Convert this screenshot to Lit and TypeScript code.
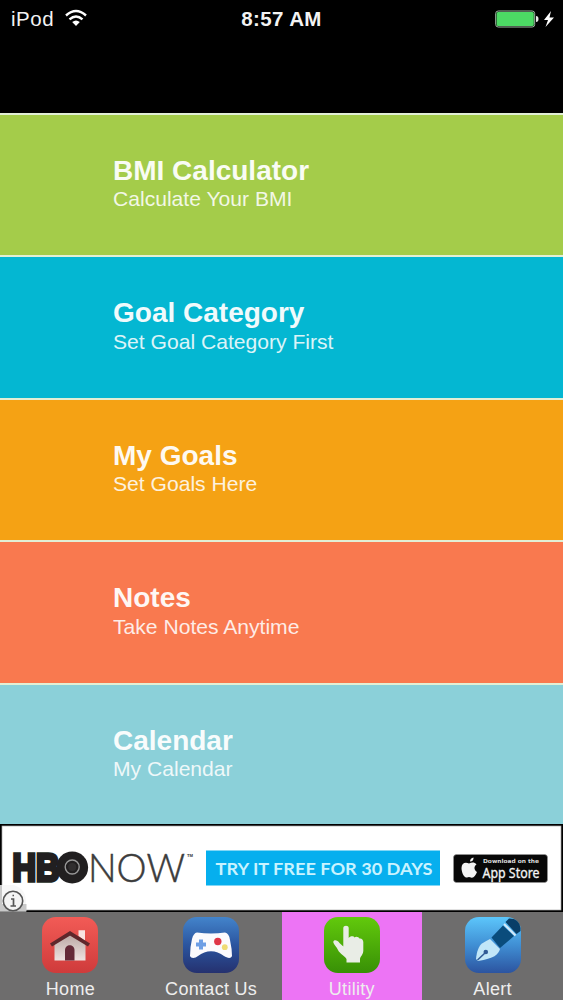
import { LitElement, html, css, svg } from 'lit';
import { customElement, property } from 'lit/decorators.js';
import { classMap } from 'lit/directives/class-map.js';

const icons: Record<string, unknown> = {
  home: svg`
    <defs>
      <linearGradient id="bg" x1="0" y1="0" x2="0" y2="1"><stop offset="0" stop-color="#f25b56"/><stop offset="1" stop-color="#cf3b3b"/></linearGradient>
      <linearGradient id="wall" x1="0" y1="0" x2="0" y2="1"><stop offset="0" stop-color="#b9a5a1"/><stop offset="1" stop-color="#eee3e1"/></linearGradient>
    </defs>
    <rect width="56" height="56" rx="14" fill="url(#bg)"/>
    <path d="M36.500 13.300H43V24L36.500 19Z" fill="#f8e2e1"/>
    <path d="M12.500 26L28 16.500L43.500 26V43.500H12.500Z" fill="url(#wall)"/>
    <path d="M23 43.500V33C23 26.500 32.500 26.500 32.500 33V43.500Z" fill="#642a38"/>
    <path d="M9 28L28 16.300L47 28" fill="none" stroke="#60272b" stroke-width="3.800"/>`,
  contact: svg`
    <defs><linearGradient id="bg" x1="0" y1="0" x2="0" y2="1"><stop offset="0" stop-color="#4384cb"/><stop offset=".5" stop-color="#2b559f"/><stop offset="1" stop-color="#25316f"/></linearGradient></defs>
    <rect width="56" height="56" rx="14" fill="url(#bg)"/>
    <path d="M14 15.500Q28 17.500 42 15.500Q46 16 47 23Q49 32 49 39C48 42 44 41 41 39C33 32.500 23 32.500 15 39C12 41.500 8 41.500 7 39Q7 30 9 22Q10.500 16 14 15.500Z" fill="#fbfafd"/>
    <path d="M16 22.500H20V25.500H23V29.500H20V32.500H16V29.500H13V25.500H16Z" fill="#6e9ee5"/>
    <circle cx="34.800" cy="24.500" r="3.700" fill="#df3547"/>
    <circle cx="41.800" cy="30.200" r="2.900" fill="#efdb74"/>`,
  utility: svg`
    <defs><linearGradient id="bg" x1="0" y1="0" x2="0" y2="1"><stop offset="0" stop-color="#62c90c"/><stop offset="1" stop-color="#389006"/></linearGradient></defs>
    <rect width="56" height="56" rx="14" fill="url(#bg)"/>
    <path d="M19.300 11C19.300 8 24.700 8 24.700 11V21C26 18.800 30 19 30.500 20.500C32 18.800 35 20 35.500 21.500C37.500 21 39.300 23 39.300 25V34C39 38 36.500 39 36 42V45.500H22.500V42C20.500 38.500 16 37 14 33C12.500 29.500 9.300 27 9.300 25C9.300 22.500 13.500 22.500 15.500 26L19.300 29.500Z" fill="#e9ede6"/>`,
  alert: svg`
    <defs>
      <linearGradient id="bg" x1="0" y1="0" x2="0" y2="1"><stop offset="0" stop-color="#5cc6fb"/><stop offset=".5" stop-color="#408fd4"/><stop offset="1" stop-color="#2c54a0"/></linearGradient>
    </defs>
    <rect width="56" height="56" rx="14" fill="url(#bg)"/>
    <path d="M26.500 20.500L38 8.500L49 19L35 31Z" fill="#0a4c7c"/>
    <path d="M40.500 5L44 1.500Q54 1 55.500 11V14L51.500 17Z" fill="#093e68"/>
    <path d="M39 7L50.500 18.500" stroke="#d4eafa" stroke-width="2"/>
    <path d="M25 22L35 32C33.500 37.500 29 41.500 13 44L11 42C11.500 35 14 28.500 17 26.500Q20 24.500 25 22Z" fill="#c1e6f8"/>
    <path d="M12.500 43L20 36" stroke="#315b96" stroke-width="1.600"/>
    <circle cx="20.800" cy="35" r="2.300" fill="#315b96"/>`,
};

@customElement('status-bar')
class StatusBar extends LitElement {
  static styles = css`
    :host {
      display: grid;
      grid-template-columns: 1fr auto 1fr;
      align-items: center;
      height: 37px;
      padding: 0 9px 0 11px;
      box-sizing: border-box;
      color: #f3f3f3;
      font-size: 20.5px;
      line-height: 37px;
    }
    .left,
    .right {
      display: flex;
      align-items: center;
    }
    .left {
      gap: 11px;
      letter-spacing: 0.5px;
    }
    .left svg {
      margin-top: -2px;
    }
    .time {
      font-weight: 700;
      font-size: 20.5px;
      letter-spacing: 0.4px;
      margin-right: 2px;
    }
    .right {
      justify-content: flex-end;
    }
    svg {
      display: block;
    }
  `;

  render() {
    return html`
      <div class="left">
        <span>iPod</span>
        <svg width="22" height="18" viewBox="0 0 22 18">
          <path d="M1 6.500Q11 -2.500 21 6.500M4.500 10.300Q11 4.500 17.500 10.300" fill="none" stroke="#fff" stroke-width="2.400"/>
          <path d="M7.200 13Q11 9.800 14.800 13L11 17Z" fill="#fff"/>
        </svg>
      </div>
      <div class="time">8:57 AM</div>
      <div class="right">
        <svg width="59" height="18" viewBox="0 0 59 18">
          <rect x="0.700" y="1" width="39" height="16" rx="2.500" fill="#000" stroke="#a0bca4" stroke-width="1"/>
          <rect x="1.600" y="1.900" width="37.200" height="14.200" rx="1.500" fill="#4cd964"/>
          <path d="M41 6Q43.500 6 43.500 9T41 12Z" fill="#e8e8e8"/>
          <path d="M56 1L49 10H53L50.500 17L59 7.500H54.500Z" fill="#fff"/>
        </svg>
      </div>
    `;
  }
}

@customElement('menu-row')
class MenuRow extends LitElement {
  @property() heading = '';
  @property() info = '';
  @property({ reflect: true }) color = '';

  static styles = css`
    :host {
      display: block;
      box-sizing: border-box;
      height: 142.5px;
      border-top: 2px solid #e2efd5;
      padding: 40.4px 0 0 113px;
      color: #fff;
    }
    :host([color='green']) {
      background: #a4cc4a;
    }
    :host([color='blue']) {
      background: #04b7d2;
    }
    :host([color='orange']) {
      background: #f5a214;
    }
    :host([color='coral']) {
      background: #f9794f;
    }
    :host([color='aqua']) {
      background: #8bd0d9;
    }
    .heading {
      margin: 0;
      font-size: 28px;
      line-height: 32px;
      font-weight: 700;
      opacity: 0.94;
    }
    .info {
      margin: -0.9px 0 0;
      font-size: 21.1px;
      line-height: 26px;
      opacity: 0.86;
    }
  `;

  render() {
    return html`
      <h3 class="heading">${this.heading}</h3>
      <p class="info">${this.info}</p>
    `;
  }
}

@customElement('ad-banner')
class AdBanner extends LitElement {
  static styles = css`
    :host {
      display: block;
      height: 88px;
    }
    svg {
      display: block;
    }
    .hbo {
      font: 700 38px 'Liberation Sans', sans-serif;
      fill: #211f20;
      stroke: #211f20;
      stroke-width: 3.6px;
    }
    .now {
      font: 300 39px Lato, sans-serif;
      fill: #3c3c3c;
      stroke: #3c3c3c;
      stroke-width: 0.5px;
    }
    .tm {
      font: 700 4px 'Liberation Sans', sans-serif;
      fill: #333;
    }
    .offer {
      font: 700 17.2px Lato, sans-serif;
      fill: #c9f3ff;
    }
    .small {
      font: 700 5.5px 'DejaVu Sans', sans-serif;
      fill: #ddd;
    }
    .store {
      font: 400 14px 'Noto Sans', sans-serif;
      fill: #f4f4f4;
      stroke: #f4f4f4;
      stroke-width: 0.3px;
    }
  `;

  render() {
    return html`
      <svg width="563" height="88" viewBox="0 0 563 88">
        <rect width="563" height="88" fill="#000"/>
        <rect x="2" y="2" width="559" height="84" fill="#fff" stroke="#aaa" stroke-width=".7"/>
        <text class="hbo" x="12.500" y="56.500" textLength="47" lengthAdjust="spacingAndGlyphs">HB</text>
        <circle cx="72.200" cy="43.500" r="15.900" fill="#211f20"/>
        <circle cx="72.200" cy="43" r="7" fill="none" stroke="#989898" stroke-width="1.400"/>
        <circle cx="72.200" cy="43" r="4" fill="#302e2f"/>
        <text class="now" x="88" y="57.500" textLength="97" lengthAdjust="spacingAndGlyphs">NOW</text>
        <text class="tm" x="187" y="32.500" textLength="6" lengthAdjust="spacingAndGlyphs">TM</text>
        <rect x="206" y="26.500" width="234" height="35" fill="#06afee"/>
        <text class="offer" x="215.500" y="51" textLength="217" lengthAdjust="spacingAndGlyphs">TRY IT FREE FOR 30 DAYS</text>
        <rect x="453.500" y="30.500" width="94" height="28" rx="3" fill="#080808" stroke="#999" stroke-width=".6"/>
        <path d="M470 37.500C470 35 471.500 34 473.500 33.500C474 36 472 37.700 470 37.500ZM461.500 44C461.500 39 465.500 37.500 469 39.500C472 38 474.500 38 476.500 40.500C473.500 42.500 474 46 477 48C475.500 51.500 473.500 54.500 471 53.500Q469 52.500 467 53.500C464 54.500 461.500 48 461.500 44Z" fill="#f4f4f4"/>
        <text class="small" x="483" y="39" textLength="56" lengthAdjust="spacingAndGlyphs">Download on the</text>
        <text class="store" x="482.500" y="53.500" textLength="57" lengthAdjust="spacingAndGlyphs">App Store</text>
        <path d="M0 61H8L26 79V87.500H0Z" fill="#c8c8c8"/>
        <path d="M2 61H14Q26 65 26 78V84H2Z" fill="#f7f7f7"/>
        <path d="M0 80H26.500V87.500H0Z" fill="#c8c8c8"/>
        <circle cx="13" cy="77" r="9.700" fill="#f4f4f4" stroke="#555" stroke-width="1.600"/>
        <path d="M11 75H13.500V82M10.500 82H16M12.500 71.500H14" fill="none" stroke="#555" stroke-width="1.700"/>
      </svg>
    `;
  }
}

@customElement('tab-item')
class TabItem extends LitElement {
  @property() icon = '';
  @property() label = '';
  @property({ type: Boolean }) active = false;

  static styles = css`
    :host {
      display: block;
      flex: 1;
    }
    .tab {
      height: 88px;
      display: flex;
      flex-direction: column;
      align-items: center;
      padding-top: 5px;
      box-sizing: border-box;
      color: #eee;
      background: #6e6d6d;
    }
    .active {
      background: #ed74f5;
    }
    svg {
      display: block;
      flex: none;
    }
    .label {
      font-size: 18px;
      line-height: 20px;
      margin-top: 6px;
      letter-spacing: 0.3px;
      white-space: nowrap;
    }
  `;

  render() {
    return html`
      <div class=${classMap({ tab: true, active: this.active })}>
        <svg width="56" height="56" viewBox="0 0 56 56">${icons[this.icon]}</svg>
        <span class="label">${this.label}</span>
      </div>
    `;
  }
}

@customElement('app-root')
class AppRoot extends LitElement {
  static styles = css`
    :host {
      display: flex;
      flex-direction: column;
      height: 1000px;
      overflow: hidden;
      background: #000;
      font-family: 'Liberation Sans', Arial, sans-serif;
    }
    .header {
      flex: none;
      height: 112.6px;
    }
    .menu {
      flex: none;
      height: 711.4px;
      overflow: hidden;
    }
    .tabs {
      display: flex;
    }
  `;

  rows = [
    { heading: 'BMI Calculator', info: 'Calculate Your BMI', color: 'green' },
    { heading: 'Goal Category', info: 'Set Goal Category First', color: 'blue' },
    { heading: 'My Goals', info: 'Set Goals Here', color: 'orange' },
    { heading: 'Notes', info: 'Take Notes Anytime', color: 'coral' },
    { heading: 'Calendar', info: 'My Calendar', color: 'aqua' },
  ];

  render() {
    return html`
      <div class="header"><status-bar></status-bar></div>
      <div class="menu">
        ${this.rows.map((row) => html`
          <menu-row heading=${row.heading} info=${row.info} color=${row.color}></menu-row>
        `)}
      </div>
      <ad-banner></ad-banner>
      <div class="tabs">
        <tab-item icon="home" label="Home"></tab-item>
        <tab-item icon="contact" label="Contact Us"></tab-item>
        <tab-item icon="utility" label="Utility" active></tab-item>
        <tab-item icon="alert" label="Alert"></tab-item>
      </div>
    `;
  }
}
